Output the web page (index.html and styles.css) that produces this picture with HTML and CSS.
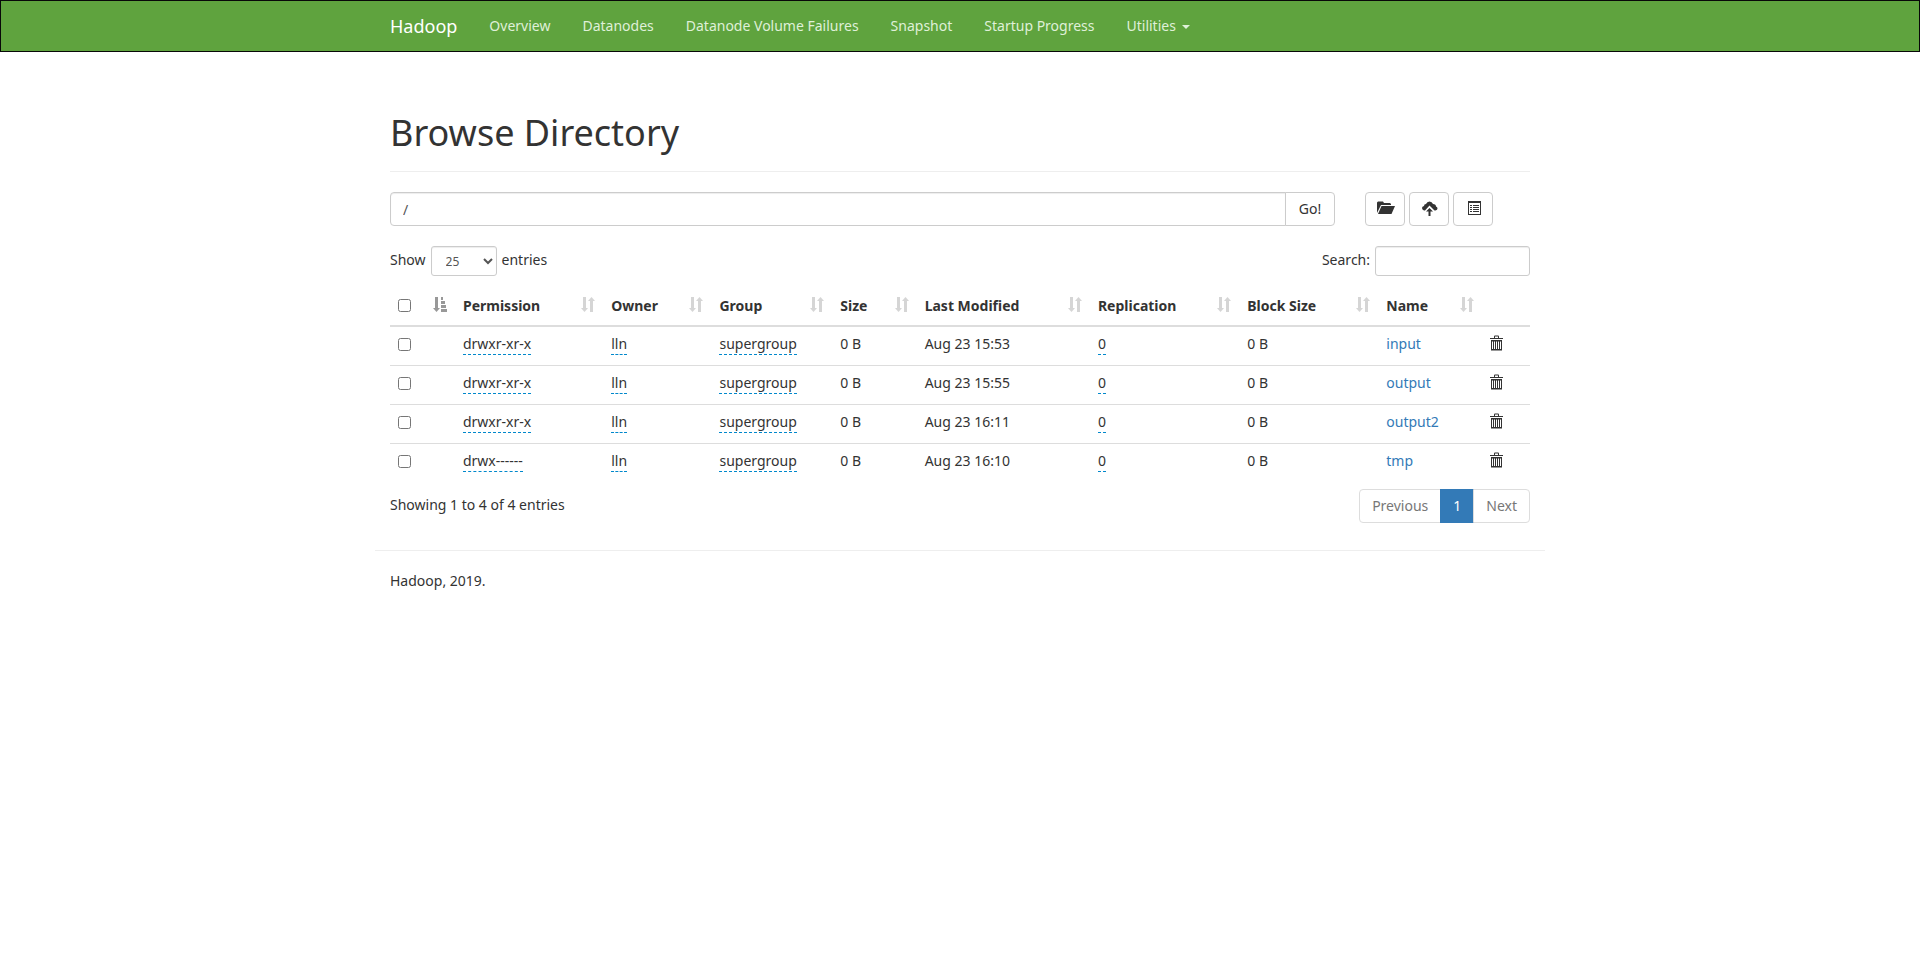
FILE: index.html
```html
<!DOCTYPE html>
<html lang="en">
<head>
<meta charset="utf-8">
<title>Browsing HDFS</title>
<link rel="stylesheet" href="styles.css">
</head>
<body>
<svg class="sprite" aria-hidden="true">
  <symbol id="sort" viewBox="0 0 14 15"><path d="M2 0h3v11h2L3.500 15 0 11h2zM9 15h3V4h2L10.500 0 7 4h2z"/></symbol>
  <symbol id="sorted" viewBox="0 0 14 15"><path d="M2 0h3v11h2L3.500 15 0 11h2zM8 0h2v3H8zM8 4h4v3H8zM8 8h5v3H8zM8 12h6v3H8z"/></symbol>
  <symbol id="trash" viewBox="0 0 14 16"><path d="M4 3V1.500Q4 .5 5 .5h3q1 0 1 1V3h4v1H0V3zM5 3h3V1.500H5zM1 5h11v10.500H1zM2 6.500V14h1V6.500zM4 6.500V14h1V6.500zM6 6.500V14h1V6.500zM8 6.500V14h1V6.500zM10 6.500V14h1V6.500z" fill-rule="evenodd"/></symbol>
  <symbol id="folder" viewBox="0 0 18 14"><path d="M0 12V1.500L1 .5h5l1 1.500h6l1 1v1H4z"/><path d="M4.500 5H18l-3.500 8H1z"/></symbol>
  <symbol id="upload" viewBox="0 0 16 15"><path d="M2 9.500Q0 8.500 0 7 0 5.500 2 5 2 3 4 3 5 .5 7.500 .5q2.500 0 3.500 2.500 3 0 3 2.500 1.500 .5 1.500 2T13.500 9.500h-1L7.500 4.500 3 9.500z"/><path d="M7.500 7L11 10.500H8.500V15h-2v-4.500H4z"/></symbol>
  <symbol id="list" viewBox="0 0 13 14"><path d="M0 0h13v14H0zM1 2v11h11V2zM2 4h2v1H2zM5 4h6v1H5zM2 6h2v1H2zM5 6h6v1H5zM2 8h2v1H2zM5 8h6v1H5zM2 10h2v1H2zM5 10h6v1H5z" fill-rule="evenodd"/></symbol>
</svg>
<header class="navbar">
  <nav class="container nav">
    <a class="brand" href="#">Hadoop</a>
    <a href="#">Overview</a>
    <a href="#">Datanodes</a>
    <a href="#">Datanode Volume Failures</a>
    <a href="#">Snapshot</a>
    <a href="#">Startup Progress</a>
    <a href="#">Utilities <span class="caret"></span></a>
  </nav>
</header>
<main class="container">
  <h1>Browse Directory</h1>
  <div class="toolbar">
    <form class="path">
      <input type="text" value="/" aria-label="Directory">
      <button type="button">Go!</button>
    </form>
    <div class="actions">
      <button type="button" class="btn" aria-label="Create directory"><svg width="18" height="14"><use href="#folder"/></svg></button>
      <button type="button" class="btn" aria-label="Upload files"><svg width="16" height="15"><use href="#upload"/></svg></button>
      <button type="button" class="btn" aria-label="Cut and paste"><svg width="13" height="14"><use href="#list"/></svg></button>
    </div>
  </div>
  <div class="filters">
    <label>Show <select><option>25</option></select> entries</label>
    <label>Search: <input type="search"></label>
  </div>
  <table>
    <colgroup><col class="c-check"><col class="c-perm"><col class="c-owner"><col class="c-group"><col class="c-size"><col class="c-mod"><col class="c-repl"><col class="c-block"><col class="c-name"><col class="c-del"></colgroup>
    <thead>
      <tr>
        <th><input type="checkbox" aria-label="Select all"><svg class="sort sorted"><use href="#sorted"/></svg></th>
        <th>Permission<svg class="sort"><use href="#sort"/></svg></th>
        <th>Owner<svg class="sort"><use href="#sort"/></svg></th>
        <th>Group<svg class="sort"><use href="#sort"/></svg></th>
        <th>Size<svg class="sort"><use href="#sort"/></svg></th>
        <th>Last Modified<svg class="sort"><use href="#sort"/></svg></th>
        <th>Replication<svg class="sort"><use href="#sort"/></svg></th>
        <th>Block Size<svg class="sort"><use href="#sort"/></svg></th>
        <th>Name<svg class="sort"><use href="#sort"/></svg></th>
        <th></th>
      </tr>
    </thead>
    <tbody>
      <tr><td><input type="checkbox" aria-label="Select input"></td><td><span class="edit">drwxr-xr-x</span></td><td><span class="edit">lln</span></td><td><span class="edit">supergroup</span></td><td>0 B</td><td>Aug 23 15:53</td><td><span class="edit">0</span></td><td>0 B</td><td><a href="#">input</a></td><td><button type="button" class="trash" aria-label="Delete input"><svg width="14" height="16"><use href="#trash"/></svg></button></td></tr>
      <tr><td><input type="checkbox" aria-label="Select output"></td><td><span class="edit">drwxr-xr-x</span></td><td><span class="edit">lln</span></td><td><span class="edit">supergroup</span></td><td>0 B</td><td>Aug 23 15:55</td><td><span class="edit">0</span></td><td>0 B</td><td><a href="#">output</a></td><td><button type="button" class="trash" aria-label="Delete output"><svg width="14" height="16"><use href="#trash"/></svg></button></td></tr>
      <tr><td><input type="checkbox" aria-label="Select output2"></td><td><span class="edit">drwxr-xr-x</span></td><td><span class="edit">lln</span></td><td><span class="edit">supergroup</span></td><td>0 B</td><td>Aug 23 16:11</td><td><span class="edit">0</span></td><td>0 B</td><td><a href="#">output2</a></td><td><button type="button" class="trash" aria-label="Delete output2"><svg width="14" height="16"><use href="#trash"/></svg></button></td></tr>
      <tr><td><input type="checkbox" aria-label="Select tmp"></td><td><span class="edit">drwx------</span></td><td><span class="edit">lln</span></td><td><span class="edit">supergroup</span></td><td>0 B</td><td>Aug 23 16:10</td><td><span class="edit">0</span></td><td>0 B</td><td><a href="#">tmp</a></td><td><button type="button" class="trash" aria-label="Delete tmp"><svg width="14" height="16"><use href="#trash"/></svg></button></td></tr>
    </tbody>
  </table>
  <div class="summary">
    <div>Showing 1 to 4 of 4 entries</div>
    <div class="pagination"><a href="#">Previous</a><a href="#" class="active">1</a><a href="#">Next</a></div>
  </div>
</main>
<footer class="container footer">Hadoop, 2019.</footer>
</body>
</html>
```
FILE: styles.css
```css
* { box-sizing: border-box; }
body {
  margin: 0;
  font: 14px/20px "Segoe UI", "Noto Sans", "Open Sans", sans-serif;
  color: #333;
  background: #fff;
}
.sprite { display: none; }
svg { fill: currentColor; }
a { color: #337ab7; text-decoration: none; }
input, select, button { font: inherit; color: inherit; }
.container { max-width: 1170px; margin: 0 auto; padding: 0 15px; }
.navbar { background: #5fa33e; border: 1px solid #080808; }
.nav { display: flex; gap: 32px; align-items: center; height: 50px; }
.nav a { color: #dff0d8; white-space: nowrap; }
.nav .brand { color: #fff; font-size: 18px; }
.caret {
  display: inline-block;
  margin-left: 2px;
  vertical-align: middle;
  border: 4px solid transparent;
  border-top-color: currentColor;
  border-bottom: 0;
}
h1 {
  margin: 61px 0 20px;
  padding-bottom: 18px;
  border-bottom: 1px solid #eee;
  font-size: 36px;
  line-height: 40px;
  font-weight: 400;
}
.toolbar { display: flex; gap: 30px; }
.path { display: flex; flex: 1; }
.path input {
  flex: 1;
  height: 34px;
  padding: 6px 12px;
  border: 1px solid #ccc;
  border-radius: 4px 0 0 4px;
  box-shadow: inset 0 1px 1px rgba(0, 0, 0, .075);
  color: #555;
}
.path button {
  width: 50px;
  padding: 0;
  margin-left: -1px;
  border: 1px solid #ccc;
  border-radius: 0 4px 4px 0;
  background: #fff;
}
.actions { display: flex; gap: 4px; padding-right: 37px; }
.btn {
  display: grid;
  place-items: center;
  width: 40px;
  height: 34px;
  padding: 0 0 2px 2px;
  border: 1px solid #ccc;
  border-radius: 4px;
  background: #fff;
}
.filters { display: flex; justify-content: space-between; margin: 20px 0 10px; }
.filters label { display: flex; align-items: center; gap: 5px; height: 30px; padding-bottom: 2px; }
.filters input, .filters select {
  height: 30px;
  margin-bottom: -2px;
  border: 1px solid #ccc;
  border-radius: 3px;
  background: #fff;
  box-shadow: inset 0 1px 1px rgba(0, 0, 0, .075);
  font-size: 12px;
  color: #555;
}
.filters select { width: 66px; padding: 5px 10px; }
.filters input { width: 155px; }
table { width: 100%; table-layout: fixed; border-collapse: separate; border-spacing: 0; }
.c-check { width: 5.7%; }
.c-perm { width: 13%; }
.c-owner { width: 9.5%; }
.c-group { width: 10.6%; }
.c-size { width: 7.4%; }
.c-mod { width: 15.2%; }
.c-repl { width: 13.1%; }
.c-block { width: 12.2%; }
.c-name { width: 9.1%; }
.c-del { width: 4.2%; }
th, td { padding: 7px 8px; text-align: left; white-space: nowrap; vertical-align: top; }
th { position: relative; height: 41px; padding-top: 10px; border-bottom: 2px solid #ddd; }
td { height: 39px; border-top: 1px solid #ddd; }
tbody tr:first-child td { border-top: 0; height: 38px; }
td input, th input { display: block; width: 13px; height: 13px; margin: 4px 0 0; }
th input { margin-top: 3px; }
.sort { position: absolute; right: 8px; bottom: 13px; width: 14px; height: 15px; opacity: .2; }
.sorted { opacity: .5; }
.edit { display: inline-block; border-bottom: 1px dashed #08c; }
.trash { display: block; padding: 1px 0 0; border: 0; background: none; }
.trash svg { display: block; }
.summary { display: flex; justify-content: space-between; margin-top: 7px; line-height: 32px; }
.pagination { display: flex; }
.pagination a { padding: 0 12px; margin-left: -1px; border: 1px solid #ddd; color: #777; }
.pagination a:first-child { border-radius: 4px 0 0 4px; }
.pagination a:last-child { border-radius: 0 4px 4px 0; }
.pagination .active { background: #337ab7; border-color: #337ab7; color: #fff; }
.footer { margin-top: 27px; padding-top: 20px; border-top: 1px solid #eee; }
```
